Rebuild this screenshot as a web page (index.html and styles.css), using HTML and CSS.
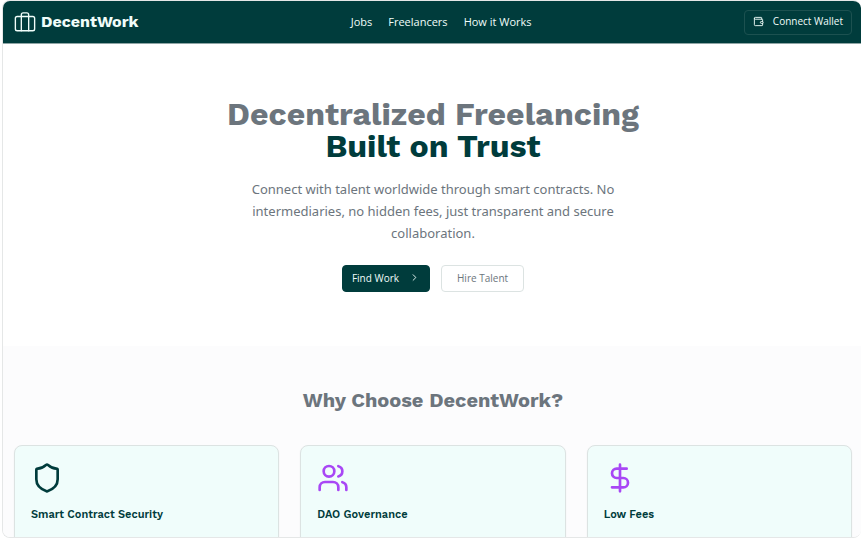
FILE: index.html
```html
<!DOCTYPE html>
<html lang="en">
<head>
<meta charset="utf-8">
<meta name="viewport" content="width=device-width, initial-scale=1">
<title>DecentWork</title>
<link rel="stylesheet" href="styles.css">
</head>
<body>
<div class="frame">
  <header class="topbar">
    <a class="brand" href="#">
      <svg class="icon brand-icon" viewBox="0 0 24 24" aria-hidden="true"><rect x="1.5" y="6" width="21" height="15.5" rx="2"/><path d="M8 21.500V4a2 2 0 0 1 2-2h4a2 2 0 0 1 2 2v17.500"/></svg>
      <span>DecentWork</span>
    </a>
    <nav class="nav">
      <a href="#">Jobs</a>
      <a href="#">Freelancers</a>
      <a href="#">How it Works</a>
    </nav>
    <button class="btn btn-wallet" type="button">
      <svg class="icon btn-icon" viewBox="0 0 24 24" aria-hidden="true"><path d="M19 7V4a1 1 0 0 0-1-1H5a2 2 0 0 0 0 4h15a1 1 0 0 1 1 1v4h-3a2 2 0 0 0 0 4h3a1 1 0 0 0 1-1v-2a1 1 0 0 0-1-1"/><path d="M3 5v14a2 2 0 0 0 2 2h15a1 1 0 0 0 1-1v-4"/></svg>
      Connect Wallet
    </button>
  </header>
  <main>
    <section class="hero">
      <h1>Decentralized Freelancing<br><span class="accent">Built on Trust</span></h1>
      <p>Connect with talent worldwide through smart contracts. No intermediaries, no hidden fees, just transparent and secure collaboration.</p>
      <div class="actions">
        <button class="btn btn-primary" type="button">Find Work
          <svg class="icon btn-icon" viewBox="0 0 24 24" aria-hidden="true"><path d="m9 18 6-6-6-6"/></svg>
        </button>
        <button class="btn btn-outline" type="button">Hire Talent</button>
      </div>
    </section>
    <section class="features">
      <h2>Why Choose DecentWork?</h2>
      <div class="cards">
        <article class="card">
          <svg class="icon card-icon" viewBox="0 0 24 24" aria-hidden="true"><path d="M20 13c0 5-3.500 7.500-7.660 8.950a1 1 0 0 1-.67-.01C7.500 20.500 4 18 4 13V6a1 1 0 0 1 1-1c2 0 4.500-1.200 6.240-2.720a1.170 1.170 0 0 1 1.520 0C14.510 3.810 17 5 19 5a1 1 0 0 1 1 1z"/></svg>
          <h3>Smart Contract Security</h3>
        </article>
        <article class="card">
          <svg class="icon card-icon purple" viewBox="0 0 24 24" aria-hidden="true"><path d="M16 21v-2a4 4 0 0 0-4-4H6a4 4 0 0 0-4 4v2"/><circle cx="9" cy="7" r="4"/><path d="M22 21v-2a4 4 0 0 0-3-3.870M16 3.130a4 4 0 0 1 0 7.750"/></svg>
          <h3>DAO Governance</h3>
        </article>
        <article class="card">
          <svg class="icon card-icon purple" viewBox="0 0 24 24" aria-hidden="true"><path d="M12 2v20M17 5H9.500a3.500 3.500 0 0 0 0 7h5a3.500 3.500 0 0 1 0 7H6"/></svg>
          <h3>Low Fees</h3>
        </article>
      </div>
    </section>
  </main>
</div>
</body>
</html>
```
FILE: styles.css
```css
:root {
  --deep: #003c3c;
  --gray: #6c757d;
  --line: #dce3e2;
  --heading: "Work Sans", Inter, sans-serif;
}
* { box-sizing: border-box; }
body {
  margin: 0;
  padding: 0 0 3px 2px;
  height: 100vh;
  background: #fff;
  color: var(--gray);
  font-family: "Open Sans", sans-serif;
}
h1, h2, h3, p { margin: 0; }
a { color: inherit; text-decoration: none; }
.frame {
  height: 100%;
  overflow: hidden;
  border: 1px solid #e5e7e7;
  border-right: 0;
  border-radius: 8px;
}
.icon {
  display: block;
  flex: none;
  fill: none;
  stroke: currentColor;
  stroke-width: 2;
  stroke-linecap: round;
  stroke-linejoin: round;
}
.topbar {
  display: flex;
  align-items: center;
  justify-content: space-between;
  height: 43px;
  padding: 0 9px 0 11px;
  background: var(--deep);
  border-bottom: 1px solid #8fa5a5;
  color: #f0fdfa;
}
.brand {
  display: flex;
  align-items: center;
  gap: 5px;
  font: 700 16px/24px var(--heading);
}
.brand-icon { width: 22px; height: 22px; stroke-width: 1.5; }
.nav { display: flex; gap: 16px; font-size: 11px; line-height: 16px; }
.btn {
  display: flex;
  align-items: center;
  justify-content: center;
  height: 27px;
  border: 1px solid var(--line);
  border-radius: 4px;
  padding: 0 15px 2px;
  font: 500 10px/16px "Open Sans", sans-serif;
}
.btn-icon { width: 11px; height: 11px; }
.btn-wallet {
  height: 25px;
  gap: 9px;
  padding: 0 8px 2px;
  background: transparent;
  border-color: #1c5150;
  color: #f0fdfa;
}
.btn-primary {
  gap: 10px;
  padding: 0 9px 2px;
  background: var(--deep);
  border-color: var(--deep);
  color: #f0fdfa;
}
.btn-outline { background: #fff; color: var(--gray); }
.hero {
  padding: 54px 9px 54px 11px;
  text-align: center;
}
h1 { font: 700 32px/32px var(--heading); }
.accent { color: var(--deep); }
.hero p {
  max-width: 400px;
  margin: 16px auto 21px;
  font-family: "Noto Sans", "Open Sans", sans-serif;
  font-size: 13px;
  line-height: 22px;
}
.actions { display: flex; justify-content: center; gap: 11px; }
.features {
  min-height: 100vh;
  padding: 40px 9px 40px 11px;
  background: #fcfcfd;
}
h2 {
  margin-bottom: 31px;
  text-align: center;
  font: 700 20px/28px var(--heading);
}
.cards { display: grid; grid-template-columns: repeat(3, 1fr); gap: 21px; }
.card {
  min-height: 140px;
  padding: 16px;
  border: 1px solid var(--line);
  border-radius: 8px;
  background: #f0fdfb;
  box-shadow: 0 1px 2px #0000000d;
  color: var(--deep);
}
.card-icon { width: 32px; height: 32px; }
.purple { color: #a847f5; }
h3 { margin-top: 13px; font: 600 11px/16px var(--heading); }
```
